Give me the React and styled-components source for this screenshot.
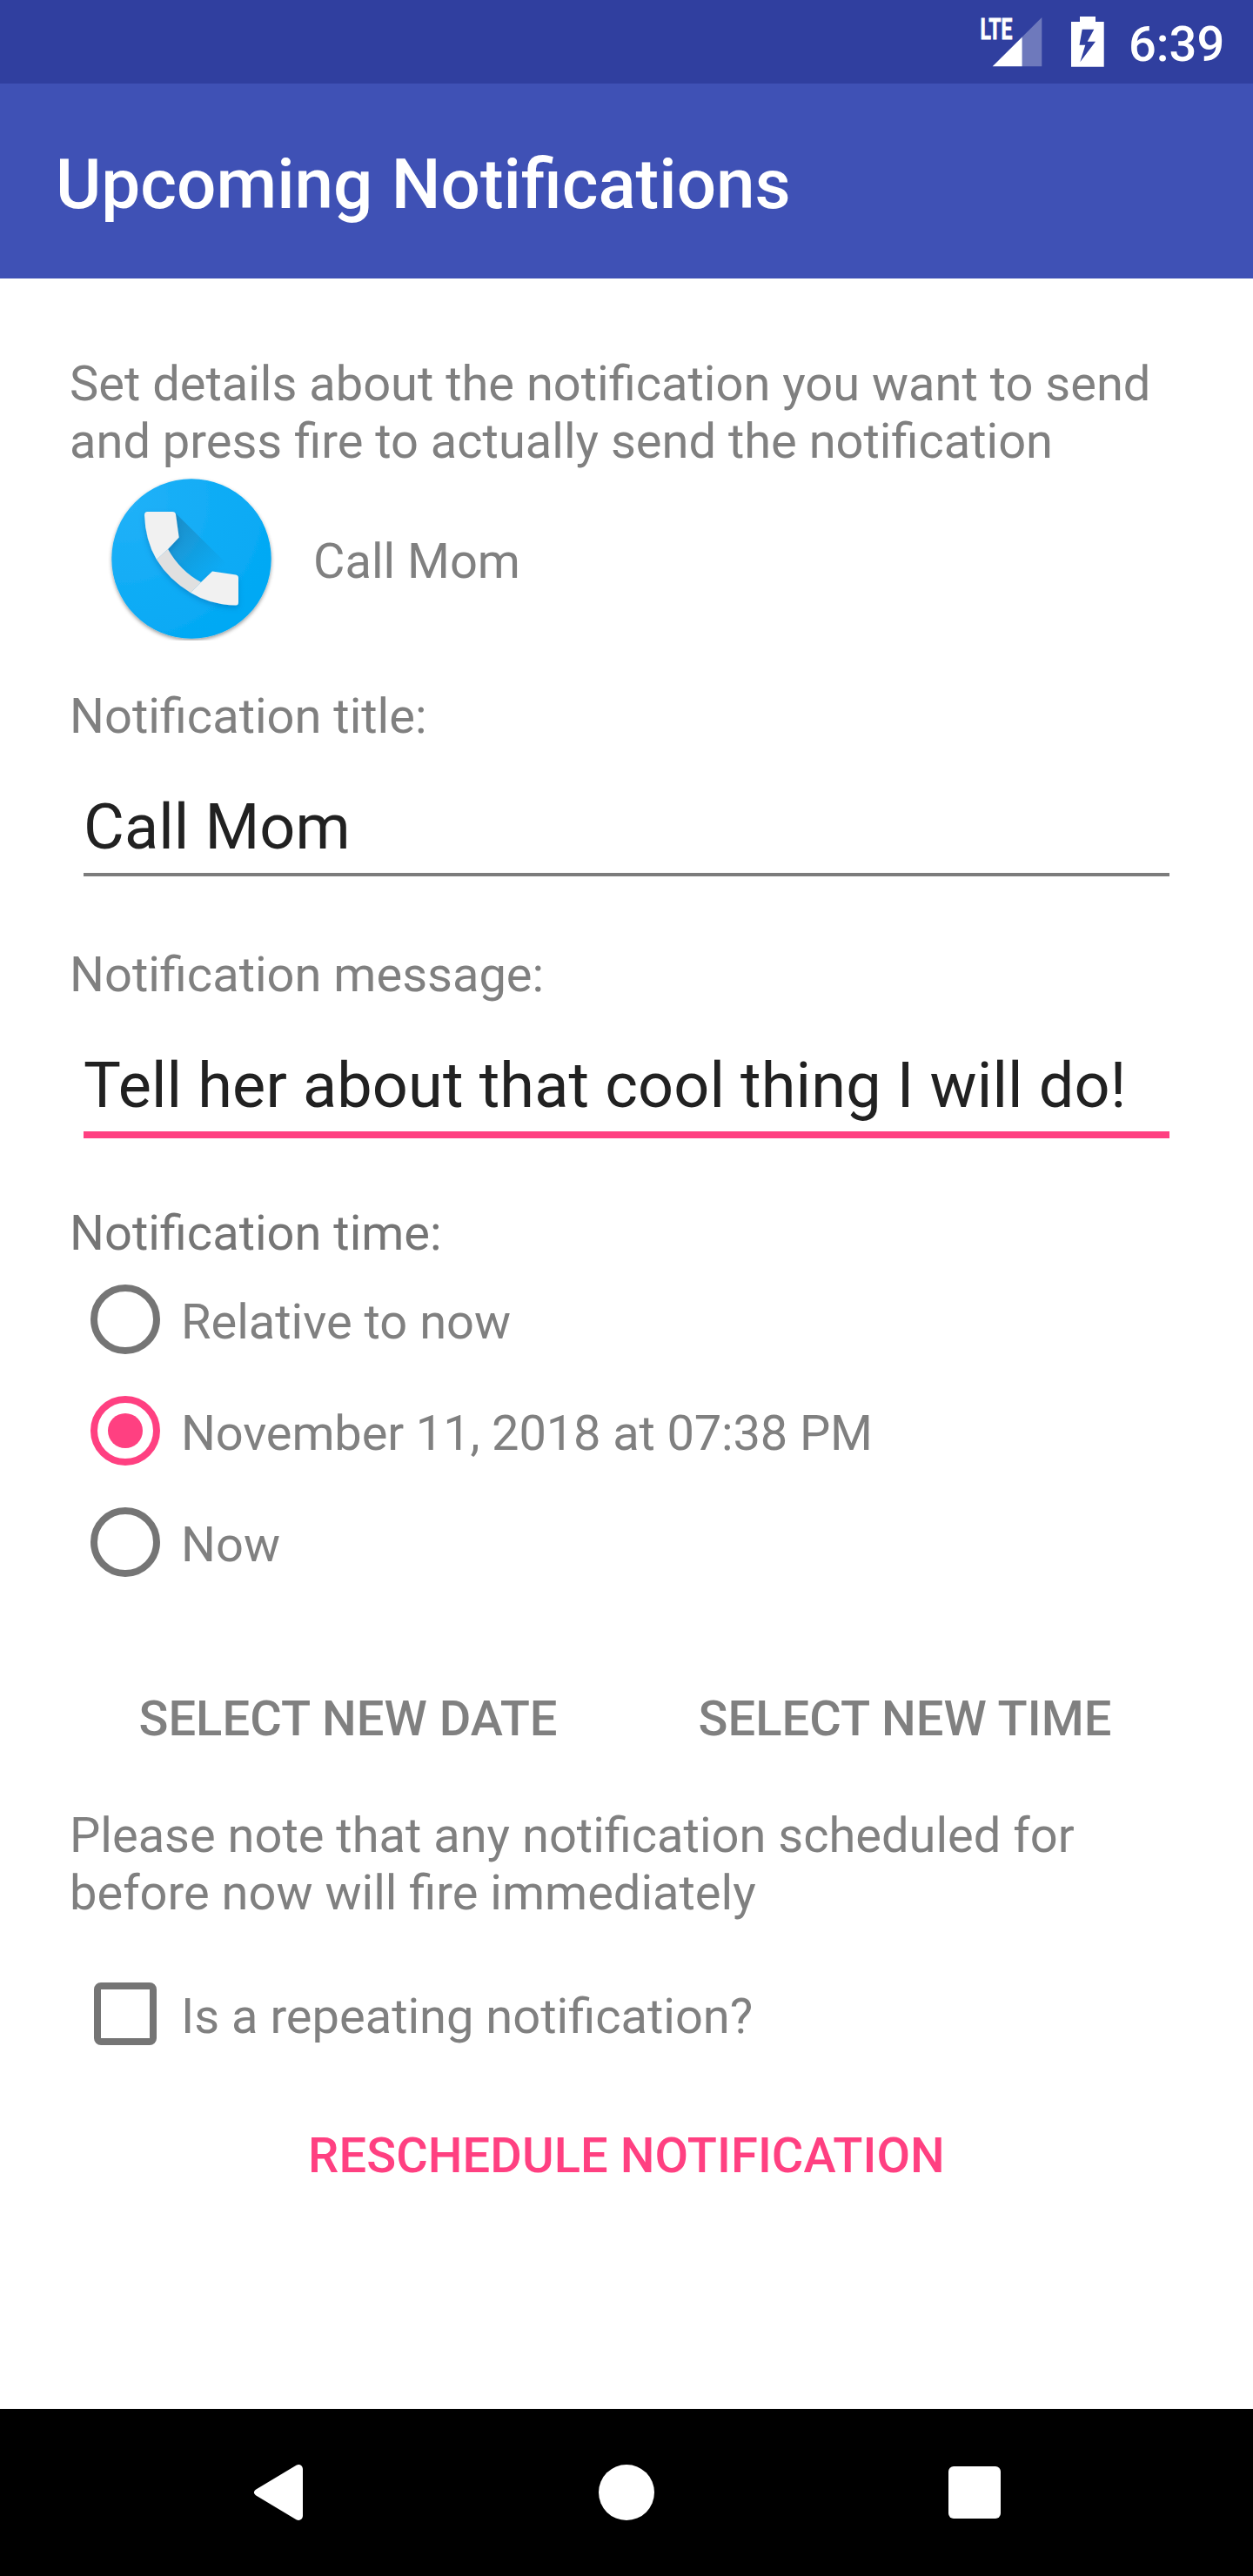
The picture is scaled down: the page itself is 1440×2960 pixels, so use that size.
import React from "react";
import styled, { createGlobalStyle } from "styled-components";

const GlobalStyle = createGlobalStyle`
  * { box-sizing: border-box; }
  body { margin: 0; background: #fff; }
`;

const Screen = styled.div`
  width: 1440px;
  height: 2960px;
  display: flex;
  flex-direction: column;
  background: #fff;
  font-family: Roboto, "Noto Sans", sans-serif;
  font-size: 56px;
  line-height: 66px;
  color: #808080;
`;

const StatusBar = styled.header`
  height: 96px;
  display: grid;
  grid-template-columns: 160px 160px;
  justify-content: end;
  background: #303f9f;
  color: #fff;
`;

const StatusIcons = styled.svg`
  width: 160px;
  height: 96px;
`;

const Clock = styled.span`
  margin: 18px 0 0 17px;
  font-size: 56px;
  font-weight: 500;
`;

const AppBar = styled.div`
  height: 224px;
  padding: 69px 64px 0;
  background: #3f51b5;
`;

const AppTitle = styled.h1`
  margin: 0;
  font-size: 80px;
  line-height: 94px;
  font-weight: 500;
  word-spacing: 1.5px;
  color: #fff;
`;

const Content = styled.main`
  flex: 1;
  padding: 88px 80px 0;
  display: flex;
  flex-direction: column;
`;

const Paragraph = styled.p`
  margin: ${(p) => p.$top || 0}px 0 0;
  white-space: nowrap;
`;

const Preview = styled.div`
  height: 192px;
  margin-top: 4px;
  padding-left: 44px;
  display: flex;
  align-items: center;
  gap: 44px;
`;

const PreviewText = styled.span`
  padding-top: 10px;
`;

const PhoneIcon = styled.svg`
  width: 192px;
  height: 192px;
  flex: none;
`;

const Label = styled.label`
  color: ${(p) => (p.$strong ? "#757575" : "#808080")};
`;

const Field = styled.div`
  height: 297px;
  display: flex;
  flex-direction: column;
`;

const Fields = styled.section`
  margin-top: 54px;
  height: 660px;
`;

const Value = styled.div`
  margin: 52px 16px 0;
  height: ${(p) => (p.$focused ? 103 : 99)}px;
  border-bottom: ${(p) => (p.$focused ? "8px solid #ff4081" : "4px solid #7c7c7c")};
  font-size: 72px;
  line-height: 86px;
  letter-spacing: ${(p) => (p.$focused ? 0.15 : 0.1)}px;
  color: #212121;
  white-space: nowrap;
`;

const Options = styled.section`
  margin-top: 2px;
  display: flex;
  flex-direction: column;
`;

const Option = styled.div`
  height: 128px;
  padding-left: 24px;
  display: flex;
  align-items: center;
  gap: 24px;
`;

const Radio = styled.span`
  width: 80px;
  height: 80px;
  display: grid;
  place-items: center;
  border: 8px solid ${(p) => (p.$checked ? "#ff4081" : "#757575")};
  border-radius: 50%;

  &::after {
    content: "";
    width: 40px;
    height: 40px;
    border-radius: 50%;
    background: ${(p) => (p.$checked ? "#ff4081" : "transparent")};
  }
`;

const OptionText = styled.span`
  padding-top: 6px;
  letter-spacing: ${(p) => p.$tracking || 0}px;
`;

const ButtonRow = styled.div`
  margin-top: 106px;
  display: grid;
  grid-template-columns: 1fr 1fr;
`;

const FlatButton = styled.button`
  border: 0;
  padding: 0;
  background: none;
  font: inherit;
  font-weight: 500;
  letter-spacing: 0.08px;
  text-align: center;
  color: ${(p) => (p.$accent ? "#ff4081" : "#808080")};
`;

const RepeatRow = styled(Option)`
  margin-top: 42px;
  padding-left: 28px;
  gap: 28px;
`;

const Checkbox = styled.span`
  width: 72px;
  height: 72px;
  border: 8px solid #757575;
  border-radius: 8px;
`;

const Submit = styled(FlatButton)`
  margin-top: 66px;
`;

const NavBar = styled.nav`
  height: 192px;
  background: #000;
`;

const NavIcons = styled.svg`
  display: block;
  width: 1440px;
  height: 192px;
`;

const LteText = styled.text`
  font-family: Roboto, sans-serif;
  font-size: 34px;
  font-weight: 700;
  fill: #fff;
  stroke: #fff;
  stroke-width: 0.8px;
`;

const options = [
  { text: "Relative to now" },
  { text: "November 11, 2018 at 07:38 PM", checked: true, tracking: -0.14 },
  { text: "Now" },
];

export default function App() {
  return (
    <Screen>
      <GlobalStyle />
      <StatusBar>
        <StatusIcons viewBox="1120 0 160 96">
          <LteText x="1126.500" y="45" textLength="37" lengthAdjust="spacingAndGlyphs">LTE</LteText>
          <path d="M1197.300 20V76.300H1174.700V42.600Z" fill="#fff" fillOpacity=".3" />
          <path d="M1174.700 42.600V76.300H1140.700Z" fill="#fff" />
          <path
            d="M1241 19h18v6h9.700v51.700H1231V25h10zM1243.700 33.700L1240.500 51.700H1247.300L1241.300 71.300L1259 47.700H1249.700L1257.300 33.700Z"
            fill="#fff"
            fillRule="evenodd"
          />
        </StatusIcons>
        <Clock>6:39</Clock>
      </StatusBar>
      <AppBar>
        <AppTitle>Upcoming Notifications</AppTitle>
      </AppBar>
      <Content>
        <Paragraph>
          Set details about the notification you want to send
          <br />
          and press fire to actually send the notification
        </Paragraph>
        <Preview>
          <PhoneIcon viewBox="0 0 192 192">
            <defs>
              <radialGradient id="disc" cx="20" cy="30" r="180" gradientUnits="userSpaceOnUse">
                <stop offset="0" stopColor="#22b1f8" />
                <stop offset="1" stopColor="#03a9f4" />
              </radialGradient>
              <linearGradient id="cast" x1="78" y1="62" x2="128" y2="112" gradientUnits="userSpaceOnUse">
                <stop offset="0" stopColor="#1b6f9c" stopOpacity=".45" />
                <stop offset="1" stopColor="#1b6f9c" stopOpacity="0" />
              </linearGradient>
              <filter id="drop" x="-10%" y="-10%" width="120%" height="120%">
                <feDropShadow dx="0" dy="2" stdDeviation="2" floodOpacity=".4" />
              </filter>
              <filter id="soft" x="-10%" y="-10%" width="120%" height="125%">
                <feDropShadow dx="0" dy="3" stdDeviation="3" floodColor="#01579b" floodOpacity=".35" />
              </filter>
            </defs>
            <circle cx="96" cy="98" r="91.700" fill="url(#disc)" filter="url(#drop)" />
            <path d="M77 45L146 113L120 112L107 124Q84 112 69 88L81 74Z" fill="url(#cast)" />
            <g filter="url(#soft)">
              <path d="M69 87Q83 112 107 125L95 137Q70 122 56 99Z" fill="#e0e0e0" />
              <path d="M45.500 44H74Q77.500 44 78 47L81.700 73.500L69 87L56 99Q43 77 42 48Q42 44 45.500 44Z" fill="#f1f1f1" />
              <path d="M107 125L120 112.500L147 116.500Q150 117 150 120V148Q150 151.500 147 151.500Q118 151 95 137Z" fill="#f1f1f1" />
            </g>
          </PhoneIcon>
          <PreviewText>Call Mom</PreviewText>
        </Preview>
        <Fields>
          <Field>
            <Label>Notification title:</Label>
            <Value>Call Mom</Value>
          </Field>
          <Field>
            <Label>Notification message:</Label>
            <Value $focused>Tell her about that cool thing I will do!</Value>
          </Field>
          <Label $strong>Notification time:</Label>
        </Fields>
        <Options>
          {options.map((o) => (
            <Option key={o.text}>
              <Radio $checked={o.checked} />
              <OptionText $tracking={o.tracking}>{o.text}</OptionText>
            </Option>
          ))}
        </Options>
        <ButtonRow>
          <FlatButton>SELECT NEW DATE</FlatButton>
          <FlatButton>SELECT NEW TIME</FlatButton>
        </ButtonRow>
        <Paragraph $top={68}>
          Please note that any notification scheduled for
          <br />
          before now will fire immediately
        </Paragraph>
        <RepeatRow>
          <Checkbox />
          <OptionText>Is a repeating notification?</OptionText>
        </RepeatRow>
        <Submit $accent>RESCHEDULE NOTIFICATION</Submit>
      </Content>
      <NavBar>
        <NavIcons viewBox="0 0 1440 192">
          <path
            d="M295.500 91.800L340.500 64.800C344 62.800 348 65 348 69.500V122.500C348 127 344 129.200 340.500 127.200L295.500 100.200C290.700 97.500 290.700 94.500 295.500 91.800Z"
            fill="#fff"
          />
          <circle cx="720" cy="96" r="32" fill="#fff" />
          <rect x="1090" y="66" width="60" height="60" rx="6" fill="#fff" />
        </NavIcons>
      </NavBar>
    </Screen>
  );
}
